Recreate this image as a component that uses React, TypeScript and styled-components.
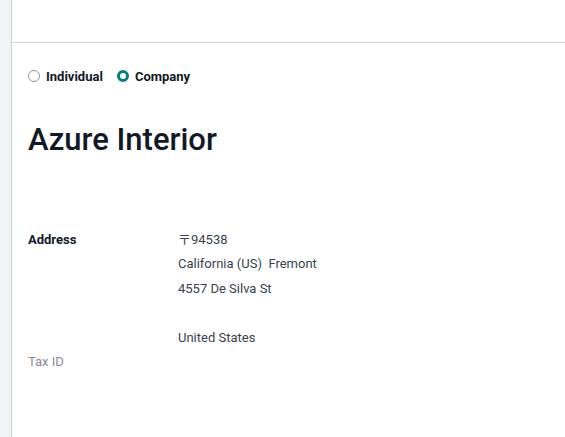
import React, { useState } from "react";
import styled, { createGlobalStyle } from "styled-components";

const Global = createGlobalStyle`
  html, body {
    margin: 0;
    padding: 0;
    background: #ffffff;
  }
  body {
    font-family: Roboto, "Noto Sans", "Noto Sans CJK JP", sans-serif;
    font-size: 13px;
    color: #374151;
  }
`;

const Page = styled.div`
  display: flex;
  min-height: 437px;
`;

const SideStrip = styled.div`
  width: 11px;
  flex-shrink: 0;
  background: #f2f3f7;
  border-right: 1px solid #ced0d6;
`;

const Sheet = styled.div`
  flex: 1;
  display: flex;
  flex-direction: column;
`;

const TopBar = styled.div`
  height: 42px;
  border-bottom: 1px solid #d3d4d9;
`;

const Body = styled.div`
  padding: 23px 16px 0 16px;
`;

const RadioRow = styled.div`
  display: flex;
  align-items: center;
  gap: 14px;
  height: 20px;
`;

const RadioOption = styled.label`
  display: flex;
  align-items: center;
  gap: 6px;
  font-weight: 700;
  font-size: 13px;
  color: #111827;
  cursor: pointer;
`;

const RadioDot = styled.span<{ checked: boolean }>`
  width: 12px;
  height: 12px;
  box-sizing: border-box;
  border-radius: 50%;
  border: ${({ checked }) => (checked ? "3.5px solid #017e84" : "1px solid #8f949c")};
  background: #ffffff;
`;

const Title = styled.h1`
  margin: 36px 0 0 0;
  font-size: 31px;
  line-height: 36px;
  font-weight: 500;
  color: #111827;
`;

const Fields = styled.div`
  margin-top: 70px;
  display: grid;
  grid-template-columns: 150px 1fr;
  line-height: 24.4px;
`;

const Label = styled.div<{ muted?: boolean }>`
  font-weight: ${({ muted }) => (muted ? 400 : 700)};
  color: ${({ muted }) => (muted ? "#868b93" : "#111827")};
`;

const Value = styled.div`
  color: #374151;
  min-height: 24.4px;
`;

const App: React.FC = () => {
  const [kind, setKind] = useState("company");

  return (
    <>
      <Global />
      <Page>
        <SideStrip />
        <Sheet>
          <TopBar />
          <Body>
            <RadioRow>
              <RadioOption onClick={() => setKind("individual")}>
                <RadioDot checked={kind === "individual"} />
                Individual
              </RadioOption>
              <RadioOption onClick={() => setKind("company")}>
                <RadioDot checked={kind === "company"} />
                Company
              </RadioOption>
            </RadioRow>
            <Title>Azure Interior</Title>
            <Fields>
              <Label>Address</Label>
              <div>
                <Value>〒94538</Value>
                <Value>California (US)&nbsp;&nbsp;Fremont</Value>
                <Value>4557 De Silva St</Value>
                <Value></Value>
                <Value>United States</Value>
              </div>
              <Label muted>Tax ID</Label>
              <Value></Value>
            </Fields>
          </Body>
        </Sheet>
      </Page>
    </>
  );
};

export default App;
